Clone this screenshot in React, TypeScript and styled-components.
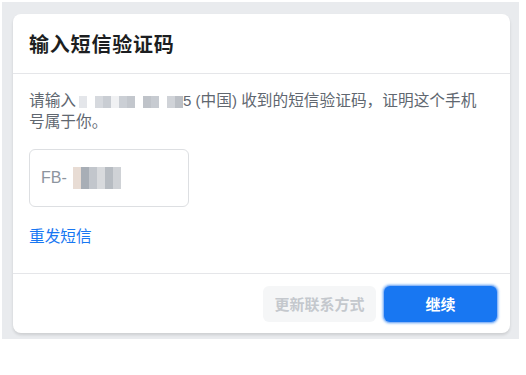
import React from "react";
import styled, { createGlobalStyle } from "styled-components";

const Global = createGlobalStyle`
  html, body { margin: 0; padding: 0; background: #ffffff; }
  body { font-family: "Liberation Sans", "Noto Sans CJK SC", sans-serif; }
`;

const Backdrop = styled.div`
  position: relative;
  margin: 2px 0 0 2px;
  width: 517px;
  height: 337px;
  box-sizing: border-box;
  background: #e9ebee;
  padding: 12px 9px 0 11px;
  overflow: hidden;
`;

const Card = styled.div`
  width: 497px;
  height: 319px;
  background: #fff;
  border-radius: 8px;
  box-shadow: 0 2px 3px rgba(0, 0, 0, 0.12);
  display: flex;
  flex-direction: column;
  overflow: hidden;
`;

const Header = styled.div`
  height: 60px;
  box-sizing: border-box;
  padding: 0 16px;
  display: flex;
  align-items: center;
  border-bottom: 1px solid #e5e6e9;
`;

const Title = styled.h2`
  margin: 0;
  font-size: 20px;
  font-weight: 700;
  color: #1c1e21;
  letter-spacing: 0.8px;
  font-family: "Noto Sans CJK SC", sans-serif;
`;

const Body = styled.div`
  flex: 1;
  padding: 16px 22px 0 16px;
  border-bottom: 1px solid #e5e6e9;
`;

const Text = styled.p`
  margin: 0;
  font-size: 15.7px;
  line-height: 20px;
  color: #606770;
  font-family: "Noto Sans CJK SC", sans-serif;
`;

const Digit = styled.span`
  font-family: "Liberation Sans", sans-serif;
  font-size: 15px;
`;

const Mosaic = styled.span<{ $w: number; $h: number; $gap: number }>`
  display: inline-flex;
  vertical-align: middle;
  margin: 0 0 0 ${(p) => p.$gap}px;
  width: ${(p) => p.$w}px;
  height: ${(p) => p.$h}px;
  filter: blur(0.7px);
`;

const Cell = styled.span`
  flex: 1;
  height: 100%;
`;

const InputBox = styled.div`
  margin-top: 18px;
  width: 160px;
  height: 58px;
  box-sizing: border-box;
  border: 1px solid #dddfe2;
  border-radius: 6px;
  display: flex;
  align-items: center;
  padding-left: 11px;
  font-size: 16px;
  color: #8d949e;
  font-family: "Liberation Sans", sans-serif;
`;

const Link = styled.a`
  display: block;
  margin-top: 19px;
  font-size: 15.7px;
  color: #1877f2;
  text-decoration: none;
  font-family: "Noto Sans CJK SC", sans-serif;
  line-height: 20px;
`;

const Footer = styled.div`
  height: 59px;
  display: flex;
  align-items: center;
  justify-content: flex-end;
  gap: 8px;
  padding-right: 13px;
`;

const Button = styled.button<{ $primary?: boolean }>`
  width: 113px;
  height: 36px;
  border-radius: 6px;
  border: none;
  font-size: 15px;
  font-weight: 700;
  font-family: "Noto Sans CJK SC", sans-serif;
  background: ${(p) => (p.$primary ? "#1877f2" : "#f5f6f7")};
  color: ${(p) => (p.$primary ? "#ffffff" : "#c4c8cd")};
  box-shadow: ${(p) => (p.$primary ? "0 0 0 1px #8fb8f6, 0 0 2px 2px rgba(24,119,242,0.35)" : "none")};
`;

const Watermark = styled.div`
  position: absolute;
  left: -14px;
  top: 200px;
  transform: rotate(-15deg);
  transform-origin: left center;
  white-space: nowrap;
  font-size: 26px;
  color: rgba(0, 0, 0, 0.025);
  font-family: "Liberation Sans", "Noto Sans CJK SC", sans-serif;
  letter-spacing: 2px;
  pointer-events: none;
`;

const phoneCells = ["#e4e6ea", "#fff", "#d6d9de", "#c9cdd3", "#f0f1f3", "#cbcfd5", "#c3c7cd", "#fff", "#bfc3c9", "#c7cbd1", "#fff", "#d0d3d8", "#bcc0c6"];
const codeCells = ["#e8dcd4", "#a8aeb6", "#c2c6cc", "#d8dadd", "#b7bcc2", "#cfd2d6"];

export default function App() {
  return (
    <>
      <Global />
      <Backdrop>
        <Card>
          <Header>
            <Title>输入短信验证码</Title>
          </Header>
          <Body>
            <Text>
              请输入
              <Mosaic $w={104} $h={12} $gap={3}>
                {phoneCells.map((c, i) => (
                  <Cell key={i} style={{ background: c }} />
                ))}
              </Mosaic>
              <Digit>5 (</Digit>中国<Digit>) </Digit>收到的短信验证码，证明这个手机号属于你。
            </Text>
            <InputBox>
              FB-
              <Mosaic $w={48} $h={22} $gap={6}>
                {codeCells.map((c, i) => (
                  <Cell key={i} style={{ background: c }} />
                ))}
              </Mosaic>
            </InputBox>
            <Link href="#">重发短信</Link>
          </Body>
          <Footer>
            <Button>更新联系方式</Button>
            <Button $primary>继续</Button>
          </Footer>
        </Card>
        <Watermark>鼎上数据采集&nbsp;&nbsp;&nbsp;www.idm.org.cn</Watermark>
      </Backdrop>
    </>
  );
}
